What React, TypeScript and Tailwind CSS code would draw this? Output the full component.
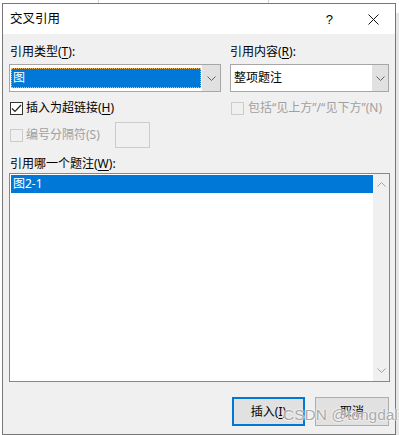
import React from 'react';

const FONT = { fontFamily: '"Noto Sans", "Noto Sans CJK SC", sans-serif' };

const Chevron: React.FC<{ up?: boolean; color?: string }> = ({ up, color = '#606060' }) => (
  <svg width="9" height="5" viewBox="0 0 9 5" fill="none" stroke={color} strokeWidth="1">
    <path d={up ? 'M0.5 4.5 L4.5 0.5 L8.5 4.5' : 'M0.5 0.5 L4.5 4.5 L8.5 0.5'} />
  </svg>
);

const Key: React.FC<{ k: string }> = ({ k }) => <span className="underline underline-offset-2">{k}</span>;

const CheckBox: React.FC<{ checked?: boolean; disabled?: boolean }> = ({ checked, disabled }) => (
  <div
    className={`w-[13px] h-[13px] border flex items-center justify-center shrink-0 ${
      disabled ? 'border-[#cccccc] bg-[#f0f0f0]' : 'border-[#333333] bg-white'
    }`}
  >
    {checked && (
      <svg width="11" height="9" viewBox="0 0 11 9" fill="none" stroke="#222" strokeWidth="1.2">
        <path d="M1 4.5 L4 7.5 L10 1" />
      </svg>
    )}
  </div>
);

const App: React.FC = () => {
  return (
    <div className="w-[399px] h-[435px] bg-white overflow-hidden relative text-[12px] text-black" style={FONT}>
      {/* window behind */}
      <div className="absolute top-0 left-[98px] w-px h-[3px] bg-[#cfcfcf]" />
      <div className="absolute top-0 left-[268px] w-px h-[3px] bg-[#cfcfcf]" />
      <div className="absolute top-[13px] left-[396px] w-[3px] h-[422px] bg-[#e6e6e6]" />

      <div className="absolute left-[2px] top-[3px] w-[394px] h-[432px] border border-[#777777] bg-[#f0f0f0] flex flex-col">
        {/* title bar */}
        <div className="h-[30px] bg-white flex items-center pl-[7px] shrink-0">
          <span className="text-[12.5px] leading-none">交叉引用</span>
          <span className="ml-auto text-[13px] leading-none mr-[35px]" style={{ fontFamily: '"Liberation Sans", sans-serif' }}>?</span>
          <svg width="11" height="11" viewBox="0 0 11 11" stroke="#111" strokeWidth="1" className="mr-[16px]">
            <path d="M0.5 0.5 L10.5 10.5 M10.5 0.5 L0.5 10.5" />
          </svg>
        </div>

        <div className="flex flex-col pl-[6px] pr-[5px]">
          {/* type / content */}
          <div className="flex gap-[9px] mt-[10px]">
            <div className="w-[212px] flex flex-col">
              <div className="h-[16px] leading-[16px] pl-px">引用类型(<Key k="T" />):</div>
              <div className="mt-[4px] h-[28px] border border-[#a6a6a6] bg-white flex items-stretch">
                <div className="flex-1 my-[3px] ml-[1px] bg-[#0078d7] border border-dotted border-[#f4b860] text-white flex items-center pl-[1px] leading-none">
                  图
                </div>
                <div className="w-[18px] ml-[1px] bg-[#e1e1e1] flex items-center justify-center">
                  <Chevron />
                </div>
              </div>
            </div>
            <div className="w-[159px] flex flex-col">
              <div className="h-[16px] leading-[16px]">引用内容(<Key k="R" />):</div>
              <div className="mt-[4px] h-[28px] border border-[#a6a6a6] bg-white flex items-stretch">
                <div className="flex-1 flex items-center pl-[3px] leading-none">整项题注</div>
                <div className="w-[16px] bg-[#e1e1e1] flex items-center justify-center">
                  <Chevron />
                </div>
              </div>
            </div>
          </div>

          {/* checkboxes */}
          <div className="flex gap-[9px] mt-[8px] h-[16px] items-center">
            <div className="w-[212px] flex items-center gap-[3px] pl-px">
              <CheckBox checked />
              <span>插入为超链接(<Key k="H" />)</span>
            </div>
            <div className="w-[159px] flex items-center gap-[4px] pl-px text-[#a0a0a0]">
              <CheckBox disabled />
              <span className="whitespace-nowrap">包括“见上方”/“见下方”(N)</span>
            </div>
          </div>

          <div className="flex items-center mt-[6px] h-[26px] pl-px">
            <CheckBox disabled />
            <span className="ml-[3px] text-[#a0a0a0]">编号分隔符(S)</span>
            <div className="ml-[15px] w-[35px] h-[26px] border border-[#cccccc] bg-[#f0f0f0]" />
          </div>

          <div className="mt-[8px] h-[16px] leading-[16px] pl-px">引用哪一个题注(<Key k="W" />):</div>

          {/* list */}
          <div className="mt-[1px] h-[209px] border border-[#828790] bg-white flex">
            <div className="flex-1 pt-px pl-px">
              <div className="h-[18px] bg-[#0078d7] text-white flex items-center pl-[2px] leading-none">图2-1</div>
            </div>
            <div className="w-[16px] bg-[#f0f0f0] flex flex-col items-center justify-between py-[8px]">
              <Chevron up color="#a3a3a3" />
              <Chevron color="#a3a3a3" />
            </div>
          </div>

          {/* buttons */}
          <div className="mt-[15px] flex justify-end gap-[10px] pr-px">
            <div className="w-[73px] h-[29px] border-2 border-[#0078d7] bg-[#e1e1e1] flex items-center justify-center">
              插入(<Key k="I" />)
            </div>
            <div className="w-[74px] h-[29px] border border-[#adadad] bg-[#e1e1e1] flex items-center justify-center">
              取消
            </div>
          </div>
        </div>
      </div>

      {/* watermark */}
      <div
        className="absolute left-[283px] top-[405px] text-[15.5px] leading-[20px] text-[#a9a9a9] whitespace-nowrap"
        style={{ fontFamily: '"Liberation Sans", sans-serif', textShadow: '0 0 2px #fff, 0 0 2px #fff' }}
      >
        CSDN @tongdali
      </div>
    </div>
  );
};

export default App;
